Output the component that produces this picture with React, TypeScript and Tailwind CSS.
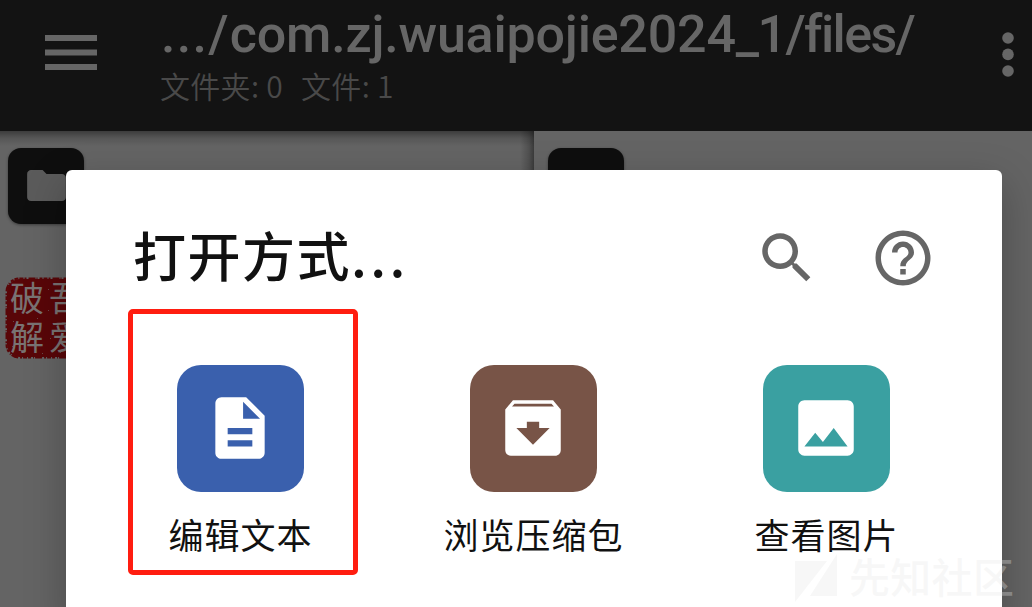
import type { ReactNode } from "react";

function MenuIcon() {
  return (
    <svg viewBox="0 0 52 35" className="h-[35px] w-[52px] shrink-0" fill="#666666">
      <path d="M0 0h52v6H0zM0 14.5h52v6H0zM0 29h52v6H0z" />
    </svg>
  );
}

function MoreIcon() {
  return (
    <svg viewBox="0 0 12 45" className="h-[45px] w-3 shrink-0" fill="#666666">
      <circle cx="6" cy="6" r="5.8" />
      <circle cx="6" cy="22.4" r="5.8" />
      <circle cx="6" cy="39" r="5.8" />
    </svg>
  );
}

function Header() {
  return (
    <header className="flex h-[131px] shrink-0 items-start bg-[#131313] pl-[45px] pr-[18px]">
      <div className="pt-[35px]">
        <MenuIcon />
      </div>
      <div className="flex flex-1 flex-col pl-16 whitespace-nowrap">
        <h1 className="h-[64px] pt-[5px] text-[52px] leading-[60px] font-medium tracking-[-0.2px] text-[#666666] font-['Roboto','Noto_Sans_CJK_SC',sans-serif]">
          <span className="tracking-[1.3px]">.../</span>com.zj.wuaipojie2024
          <span className="tracking-[-1.6px]">_1/files/</span>
        </h1>
        <div className="-ml-px flex gap-[18px] text-[30px] leading-[42px] font-[350] tracking-[0.3px] text-[#494949] font-['Noto_Sans_CJK_SC',sans-serif]">
          <span>文件夹: 0</span>
          <span>文件: 1</span>
        </div>
      </div>
      <div className="pt-8">
        <MoreIcon />
      </div>
    </header>
  );
}

function FolderTile() {
  return (
    <div className="flex size-[76px] items-center justify-center rounded-[13px] bg-[#0e0e0e] pb-px shadow-[0_1px_3px_rgba(0,0,0,0.4)]">
      <svg viewBox="2 4 20 16" className="h-[31px] w-[39px]" fill="#5b5b5b">
        <path d="M10 4H4c-1.1 0-2 .9-2 2v12c0 1.100.9 2 2 2h16c1.100 0 2-.9 2-2V8c0-1.100-.9-2-2-2h-8z" />
      </svg>
    </div>
  );
}

function Seal() {
  return (
    <div className="relative size-[82px]">
      <svg viewBox="0 0 82 82" className="absolute inset-0 size-[82px]">
        <rect x="2" y="2" width="78" height="78" rx="13" fill="#590608" />
        <rect x="1.500" y="1.500" width="79" height="79" rx="13" fill="none" stroke="#590608" strokeWidth="2" strokeDasharray="4 1 2 2 7 1 1 2 3 1" />
        <g fill="#777" opacity=".6">
          <path d="M8 44h1v1H8zM32 41h1v1h-1zM43 12h1v1h-1zM45 61h1v1h-1zM7 69h1v1H7zM55 75h1v1h-1zM37 76h1v1h-1zM43 33h1v1h-1z" />
        </g>
      </svg>
      <div className="relative grid grid-cols-[39px_39px] grid-rows-[39px_39px] pl-[5px] text-[34px] leading-[39px] text-[#797373] font-['Noto_Sans_CJK_SC',sans-serif]">
        <span>破</span>
        <span>吾</span>
        <span>解</span>
        <span>爱</span>
      </div>
    </div>
  );
}

function Panes() {
  return (
    <main className="grid flex-1 grid-cols-[534px_1fr] bg-[#646464]">
      <section className="flex flex-col gap-[53px] bg-[linear-gradient(to_bottom,rgba(0,0,0,0.4),rgba(0,0,0,0.14)_7px,transparent_15px),linear-gradient(to_left,rgba(0,0,0,0.42),rgba(0,0,0,0.2)_5px,transparent_14px)] pt-[17px] pl-2">
        <FolderTile />
        <div className="-ml-[3px]">
          <Seal />
        </div>
      </section>
      <section className="pt-[17px] pl-[14px]">
        <FolderTile />
      </section>
    </main>
  );
}

function SearchIcon() {
  return (
    <svg viewBox="0 0 24 24" className="size-[66px]" fill="#666666">
      <path d="M15.500 14h-.79l-.28-.27C15.410 12.590 16 11.110 16 9.500 16 5.910 13.090 3 9.500 3S3 5.910 3 9.500 5.910 16 9.500 16c1.610 0 3.090-.59 4.230-1.570l.27.28v.79l5 4.990L20.490 19l-4.990-5zm-6 0C7.010 14 5 11.990 5 9.500S7.010 5 9.500 5 14 7.010 14 9.500 11.990 14 9.500 14z" />
    </svg>
  );
}

function HelpIcon() {
  return (
    <svg viewBox="0 0 24 24" className="size-[66px]" fill="#666666">
      <path d="M11 18h2v-2h-2v2zm1-16C6.480 2 2 6.480 2 12s4.480 10 10 10 10-4.480 10-10S17.520 2 12 2zm0 18c-4.410 0-8-3.590-8-8s3.590-8 8-8 8 3.590 8 8-3.590 8-8 8zm0-14c-2.210 0-4 1.790-4 4h2c0-1.100.9-2 2-2s2 .9 2 2c0 2-3 1.750-3 5h2c0-2.250 3-2.500 3-5 0-2.210-1.790-4-4-4z" />
    </svg>
  );
}

function Option({ color, label, path }: { color: string; label: string; path: ReactNode }) {
  return (
    <button className="flex w-[293px] flex-col items-center">
      <span className={`flex size-[127px] items-center justify-center rounded-[24px] pr-[0.8px] pb-[0.8px] ${color}`}>
        <svg viewBox="0 0 24 24" className="size-[74px]" fill="white">
          {path}
        </svg>
      </span>
      <span className="mt-[16px] text-[35px] leading-[52px] tracking-[1px] text-[#111111] font-['Noto_Sans_CJK_SC',sans-serif]">
        {label}
      </span>
    </button>
  );
}

function OpenWithDialog() {
  return (
    <div className="absolute top-[170px] left-[66px] h-[450px] w-[936px] rounded-[6px] bg-white shadow-[0_14px_40px_rgba(0,0,0,0.26)]">
      <div className="flex h-[195px] items-start pt-[55px] pr-[66.500px] pl-[67px]">
        <h2 className="-mt-[11px] flex-1 text-[53px] leading-[80px] font-medium tracking-[1.500px] text-[#111111] font-['Noto_Sans_CJK_SC',sans-serif]">
          打开方式<span className="tracking-[3.500px]">...</span>
        </h2>
        <SearchIcon />
        <div className="ml-[49.500px]">
          <HelpIcon />
        </div>
      </div>
      <div className="flex pl-[28px]">
        <Option
          color="bg-[#3a60ad]"
          label="编辑文本"
          path={<path d="M14 2H6c-1.100 0-1.990.9-1.990 2L4 20c0 1.100.89 2 1.990 2H18c1.100 0 2-.9 2-2V8l-6-6zm2 16H8v-2h8v2zm0-4H8v-2h8v2zm-3-5V3.500L18.500 9H13z" />}
        />
        <Option
          color="bg-[#785447]"
          label="浏览压缩包"
          path={<path fillRule="evenodd" d="M18.500 3h-13L3 6v13.200c0 1 .8 1.800 1.800 1.800h14.400c1 0 1.800-.8 1.800-1.800V6zM6 4.100h12l.8.9H5.200zM10 10h4v2h3.400L12 17.400 6.600 12H10z" />}
        />
        <Option
          color="bg-[#3aa0a1]"
          label="查看图片"
          path={<path d="M21 19V5c0-1.100-.9-2-2-2H5c-1.100 0-2 .9-2 2v14c0 1.100.9 2 2 2h14c1.100 0 2-.9 2-2zM8.500 13.500l2.500 3.010L14.500 12l4.500 6H5l3.500-4.500z" />}
        />
      </div>
    </div>
  );
}

function Watermark() {
  return (
    <div className="absolute top-[546px] left-[795px] flex items-center gap-[12px]">
      <svg viewBox="0 0 42 54" className="h-[54px] w-[42px]" fill="#e7e7e7" fillOpacity="0.33">
        <path d="M0 13h32L0 54zM42 6v42H15z" />
      </svg>
      <span className="text-[41px] leading-[58px] font-medium tracking-[0.3px] whitespace-nowrap text-[#e7e7e7]/33 font-['Noto_Sans_CJK_SC',sans-serif]">
        先知社区
      </span>
    </div>
  );
}

export default function App() {
  return (
    <div className="relative flex h-[607px] w-[1032px] flex-col overflow-hidden bg-[#646464]">
      <Header />
      <Panes />
      <OpenWithDialog />
      <div className="absolute top-[309px] left-[128px] h-[266px] w-[230px] rounded-[5px] border-[5px] border-[#ff1d10]" />
      <Watermark />
    </div>
  );
}
